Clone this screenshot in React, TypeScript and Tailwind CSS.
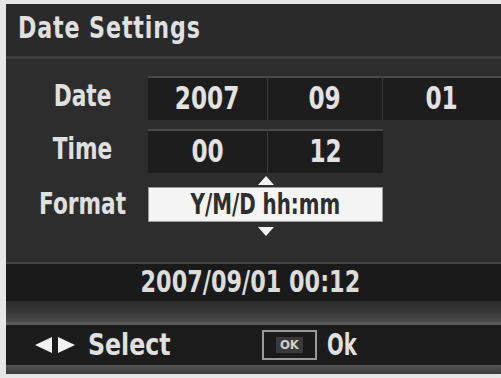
const font = "font-['Liberation_Sans_Narrow','DejaVu_Sans_Condensed','DejaVu_Sans',sans-serif]";

function Cell({ value, last }: { value: string; last?: boolean }) {
  return (
    <div
      className={`flex items-center justify-center bg-[#1d1d1d] border-t-2 border-[#4a4a4a] ${
        last ? '' : 'border-r border-r-[#3a3a3a]'
      }`}
    >
      <span className="inline-block text-[28px] font-bold text-[#e2e2e2] scale-x-[0.92] scale-y-[1.12]">{value}</span>
    </div>
  );
}

function Label({ text }: { text: string }) {
  return (
    <span className="inline-block text-[28px] font-bold text-[#e0e0e0] scale-x-[0.86] scale-y-[1.1]">{text}</span>
  );
}

export default function App() {
  return (
    <div className={`w-[501px] h-[378px] bg-[#e6e6e6] pt-[4px] pl-[6px] pb-[4px] ${font}`}>
      <div className="h-full flex flex-col bg-[#2d2d2d]">
        <div className="h-[52px] shrink-0 bg-[#2a2a2a] flex items-center pl-[12px] pb-[3px]">
          <span className="inline-block origin-left text-[28px] font-bold text-[#e0e0e0] tracking-[1px] scale-x-[0.88] scale-y-[1.05]">
            Date Settings
          </span>
        </div>
        <div className="h-[3px] shrink-0 bg-[#3e3e3e]" />
        <div className="flex-1 flex flex-col pt-[17px]">
          <div className="flex h-[40px]">
            <div className="w-[142px] flex items-center justify-center pl-[12px]">
              <Label text="Date" />
            </div>
            <div className="flex-1 grid grid-cols-[120px_115px_1fr]">
              <Cell value="2007" />
              <Cell value="09" />
              <Cell value="01" last />
            </div>
          </div>
          <div className="flex h-[40px] mt-[13px]">
            <div className="w-[142px] flex items-center justify-center pl-[12px]">
              <Label text="Time" />
            </div>
            <div className="grid grid-cols-[120px_115px]">
              <Cell value="00" />
              <Cell value="12" last />
            </div>
          </div>
          <div className="flex">
            <div className="w-[142px] flex items-center justify-center pl-[12px] pt-[3px]">
              <Label text="Format" />
            </div>
            <div className="w-[235px] flex flex-col items-center">
              <svg width="16" height="9" viewBox="0 0 16 9" className="mt-[7px]">
                <polygon points="8,0 16,9 0,9" fill="#f0f0f0" />
              </svg>
              <div className="w-full h-[35px] mt-[2px] bg-[#f4f4f4] border border-[#9a9a9a] flex items-center justify-center">
                <span className="inline-block text-[24px] font-bold text-[#2e2e2e] scale-x-[0.92] scale-y-[1.15]">
                  Y/M/D hh:mm
                </span>
              </div>
              <svg width="16" height="9" viewBox="0 0 16 9" className="mt-[5px]">
                <polygon points="0,0 16,0 8,9" fill="#f0f0f0" />
              </svg>
            </div>
          </div>
          <div className="mt-[26px] h-[2px] bg-[#444]" />
          <div className="h-[37px] bg-[#1a1a1a] flex items-center justify-center">
            <span className="inline-block text-[27px] font-bold text-[#dcdcdc] scale-x-[0.92] scale-y-[1.1] -ml-[6px]">
              2007/09/01 00:12
            </span>
          </div>
          <div className="h-[21px] bg-gradient-to-b from-[#2c2c2c] via-[#383838] to-[#4c4c4c]" />
          <div className="h-[3px] bg-[#5a5a5a]" />
          <div className="h-[40px] bg-[#1c1c1c] flex items-center">
            <div className="flex items-center ml-[29px]">
              <svg width="41" height="16" viewBox="0 0 41 16">
                <polygon points="0,8 17,0 17,16" fill="#f2f2f2" />
                <polygon points="23,0 40,8 23,16" fill="#f2f2f2" />
              </svg>
              <span className="inline-block origin-left text-[28px] font-bold text-[#e0e0e0] scale-x-[0.94] scale-y-[1.1] ml-[12px]">
                Select
              </span>
            </div>
            <div className="ml-[86px] w-[55px] h-[30px] border-2 border-[#9a9a9a] bg-[#1a1a1a] flex items-center justify-center">
              <span className="text-[13px] font-bold text-[#cfcfcf] bg-[#3a3a3a] px-[4px] leading-[16px]">OK</span>
            </div>
            <span className="inline-block origin-left ml-[10px] text-[28px] font-bold text-[#e0e0e0] scale-x-[0.78] scale-y-[1.1]">
              Ok
            </span>
          </div>
          <div className="flex-1 bg-gradient-to-b from-[#555] to-[#3a3a3a]" />
        </div>
      </div>
    </div>
  );
}
